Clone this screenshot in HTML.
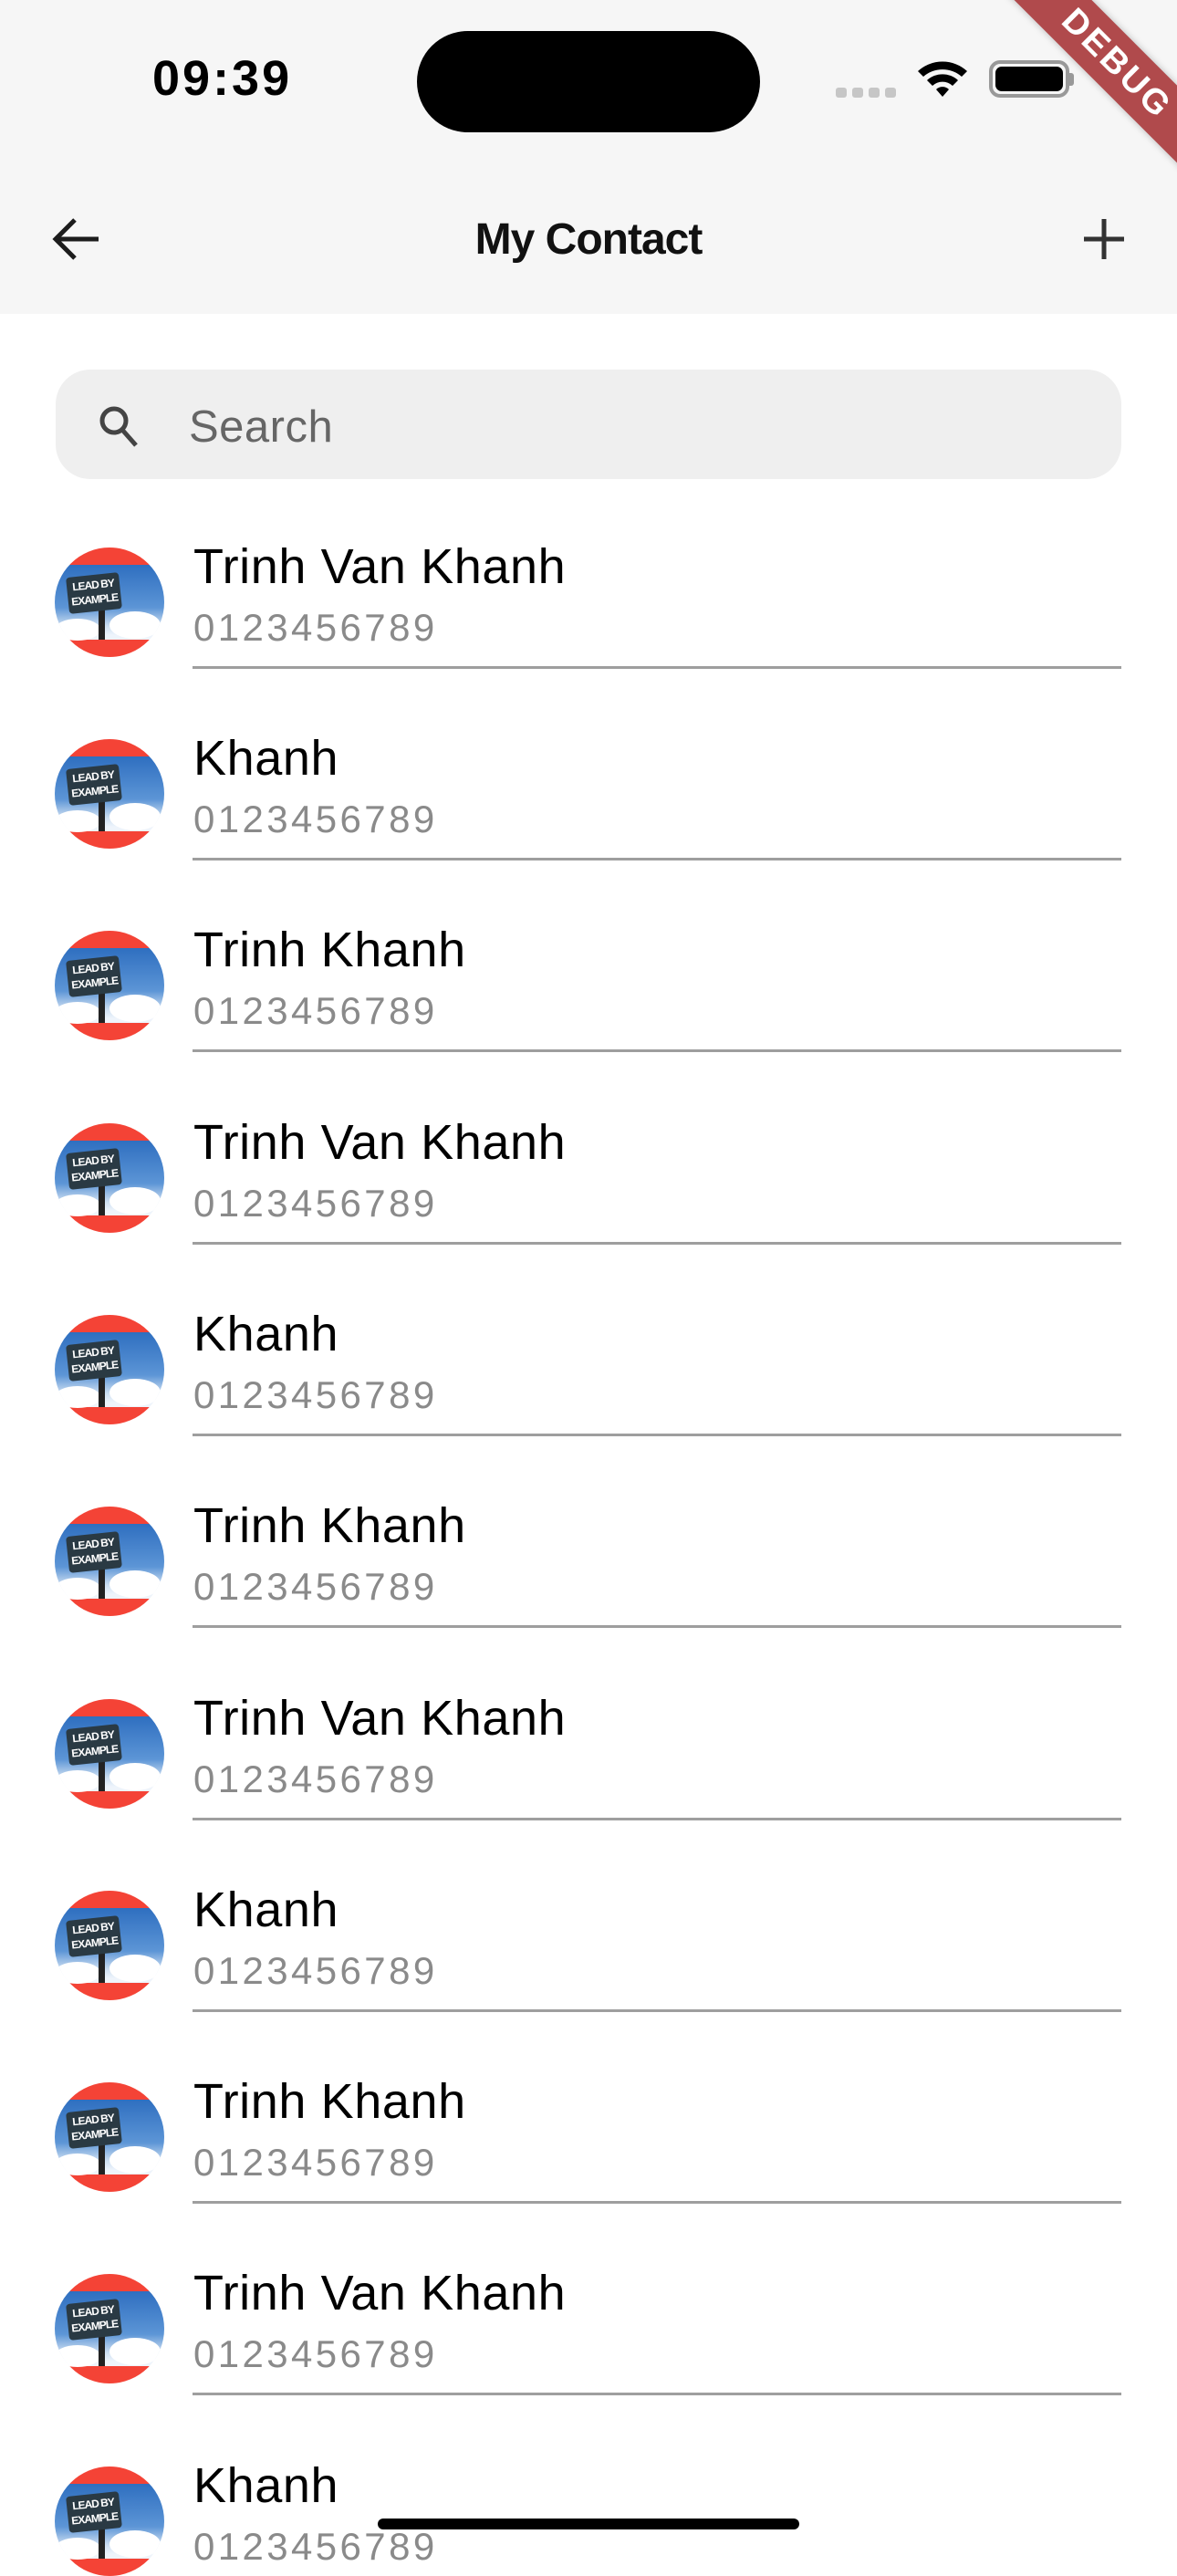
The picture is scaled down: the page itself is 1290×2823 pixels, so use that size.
<!DOCTYPE html>
<html><head><meta charset="utf-8">
<style>
*{margin:0;padding:0;box-sizing:border-box}
body{width:1290px;height:2796px;background:#fff;position:relative;overflow:hidden;font-family:"Liberation Sans",sans-serif}
.abs{position:absolute}
.hdr{left:0;top:0;width:1290px;height:344px;background:#f6f6f6}
.name{position:absolute;left:212px;font-size:54px;line-height:54px;color:#000;white-space:nowrap;letter-spacing:0.6px}
.phone{position:absolute;left:212px;font-size:42px;line-height:42px;color:#8a8a8a;letter-spacing:3.4px;white-space:nowrap}
.div{position:absolute;left:211px;width:1018px;height:3px;background:#9e9e9e}
.av{position:absolute;left:60px;width:120px;height:120px;border-radius:50%;overflow:hidden;
background:linear-gradient(#f44336 0,#f44336 16%,#2f6fc0 16%,#5c95d6 55%,#cfe0f2 72%,#eef4fb 80%,#eef4fb 84%,#f44336 84%)}
.av .cl{position:absolute;background:#fff;border-radius:50%}
.av .post{position:absolute;left:48px;top:60px;width:7px;height:41px;background:#222}
.av .sign{position:absolute;left:14px;top:30px;width:58px;height:40px;background:#2a3a44;border-radius:4px;transform:rotate(-6deg);color:#fff;font-size:12px;line-height:16px;font-weight:bold;text-align:center;padding-top:3px;letter-spacing:-1px}
</style></head><body>
<div class="abs hdr"></div>
<div class="abs" style="left:167px;top:58px;font-size:54px;font-weight:bold;line-height:56px;color:#000;letter-spacing:3px">09:39</div>
<div class="abs" style="left:457px;top:34px;width:376px;height:111px;border-radius:56px;background:#000"></div>
<div class="abs" style="left:916px;top:96px;width:12px;height:11px;border-radius:3px;background:#c6c6c6"></div>
<div class="abs" style="left:934px;top:96px;width:12px;height:11px;border-radius:3px;background:#c6c6c6"></div>
<div class="abs" style="left:952px;top:96px;width:12px;height:11px;border-radius:3px;background:#c6c6c6"></div>
<div class="abs" style="left:970px;top:96px;width:12px;height:11px;border-radius:3px;background:#c6c6c6"></div>
<svg class="abs" style="left:1004px;top:64px" width="58" height="44" viewBox="0 0 58 44">
<path d="M2 14 A40 40 0 0 1 56 14 L50 20 A32 32 0 0 0 8 20Z" fill="#000"/>
<path d="M12 24 A25 25 0 0 1 46 24 L40 30 A16 16 0 0 0 18 30Z" fill="#000"/>
<path d="M22 34 A10 10 0 0 1 36 34 L29 42Z" fill="#000"/>
</svg>
<div class="abs" style="left:1084px;top:66px;width:88px;height:41px;border:4px solid #999;border-radius:12px;padding:3px"><div style="width:100%;height:100%;background:#000;border-radius:7px"></div></div>
<div class="abs" style="left:1172px;top:80px;width:5px;height:14px;background:#999;border-radius:0 3px 3px 0"></div>
<div class="abs" style="left:1074px;top:40px;width:300px;height:60px;background:#b04a4c;transform:rotate(45deg);color:#fff;font-weight:bold;font-size:38px;line-height:60px;text-align:center;letter-spacing:3px;box-shadow:0 0 8px rgba(0,0,0,.25)">DEBUG</div>
<svg class="abs" style="left:56px;top:238px" width="56" height="48" viewBox="0 0 56 48"><path d="M52 24H6M26 3L5 24l21 21" stroke="#1c1c1c" stroke-width="5" fill="none"/></svg>
<div class="abs" style="left:0;width:1290px;top:236px;text-align:center;font-size:48px;font-weight:bold;line-height:54px;color:#111;letter-spacing:-1px">My Contact</div>
<svg class="abs" style="left:1186px;top:238px" width="48" height="48" viewBox="0 0 48 48"><path d="M24 2V46M2 24H46" stroke="#333" stroke-width="5"/></svg>
<div class="abs" style="left:61px;top:405px;width:1168px;height:120px;border-radius:38px;background:#efefef"></div>
<svg class="abs" style="left:108px;top:444px" width="46" height="48" viewBox="0 0 46 48"><circle cx="17" cy="17" r="13" stroke="#444" stroke-width="5" fill="none"/><path d="M26 27L41 44" stroke="#444" stroke-width="5"/></svg>
<div class="abs" style="left:207px;top:441px;font-size:49px;line-height:54px;color:#666;letter-spacing:0.5px">Search</div>

<div class="av" style="top:600px"><div class="cl" style="left:0px;top:78px;width:50px;height:24px"></div><div class="cl" style="left:60px;top:70px;width:56px;height:30px"></div><div class="post"></div><div class="sign">LEAD BY<br>EXAMPLE</div></div>
<div class="name" style="top:594px">Trinh Van Khanh</div><div class="phone" style="top:667px">0123456789</div><div class="div" style="top:730px"></div>

<div class="av" style="top:810px"><div class="cl" style="left:0px;top:78px;width:50px;height:24px"></div><div class="cl" style="left:60px;top:70px;width:56px;height:30px"></div><div class="post"></div><div class="sign">LEAD BY<br>EXAMPLE</div></div>
<div class="name" style="top:804px">Khanh</div><div class="phone" style="top:877px">0123456789</div><div class="div" style="top:940px"></div>

<div class="av" style="top:1020px"><div class="cl" style="left:0px;top:78px;width:50px;height:24px"></div><div class="cl" style="left:60px;top:70px;width:56px;height:30px"></div><div class="post"></div><div class="sign">LEAD BY<br>EXAMPLE</div></div>
<div class="name" style="top:1014px">Trinh Khanh</div><div class="phone" style="top:1087px">0123456789</div><div class="div" style="top:1150px"></div>

<div class="av" style="top:1231px"><div class="cl" style="left:0px;top:78px;width:50px;height:24px"></div><div class="cl" style="left:60px;top:70px;width:56px;height:30px"></div><div class="post"></div><div class="sign">LEAD BY<br>EXAMPLE</div></div>
<div class="name" style="top:1225px">Trinh Van Khanh</div><div class="phone" style="top:1298px">0123456789</div><div class="div" style="top:1361px"></div>

<div class="av" style="top:1441px"><div class="cl" style="left:0px;top:78px;width:50px;height:24px"></div><div class="cl" style="left:60px;top:70px;width:56px;height:30px"></div><div class="post"></div><div class="sign">LEAD BY<br>EXAMPLE</div></div>
<div class="name" style="top:1435px">Khanh</div><div class="phone" style="top:1508px">0123456789</div><div class="div" style="top:1571px"></div>

<div class="av" style="top:1651px"><div class="cl" style="left:0px;top:78px;width:50px;height:24px"></div><div class="cl" style="left:60px;top:70px;width:56px;height:30px"></div><div class="post"></div><div class="sign">LEAD BY<br>EXAMPLE</div></div>
<div class="name" style="top:1645px">Trinh Khanh</div><div class="phone" style="top:1718px">0123456789</div><div class="div" style="top:1781px"></div>

<div class="av" style="top:1862px"><div class="cl" style="left:0px;top:78px;width:50px;height:24px"></div><div class="cl" style="left:60px;top:70px;width:56px;height:30px"></div><div class="post"></div><div class="sign">LEAD BY<br>EXAMPLE</div></div>
<div class="name" style="top:1856px">Trinh Van Khanh</div><div class="phone" style="top:1929px">0123456789</div><div class="div" style="top:1992px"></div>

<div class="av" style="top:2072px"><div class="cl" style="left:0px;top:78px;width:50px;height:24px"></div><div class="cl" style="left:60px;top:70px;width:56px;height:30px"></div><div class="post"></div><div class="sign">LEAD BY<br>EXAMPLE</div></div>
<div class="name" style="top:2066px">Khanh</div><div class="phone" style="top:2139px">0123456789</div><div class="div" style="top:2202px"></div>

<div class="av" style="top:2282px"><div class="cl" style="left:0px;top:78px;width:50px;height:24px"></div><div class="cl" style="left:60px;top:70px;width:56px;height:30px"></div><div class="post"></div><div class="sign">LEAD BY<br>EXAMPLE</div></div>
<div class="name" style="top:2276px">Trinh Khanh</div><div class="phone" style="top:2349px">0123456789</div><div class="div" style="top:2412px"></div>

<div class="av" style="top:2492px"><div class="cl" style="left:0px;top:78px;width:50px;height:24px"></div><div class="cl" style="left:60px;top:70px;width:56px;height:30px"></div><div class="post"></div><div class="sign">LEAD BY<br>EXAMPLE</div></div>
<div class="name" style="top:2486px">Trinh Van Khanh</div><div class="phone" style="top:2559px">0123456789</div><div class="div" style="top:2622px"></div>

<div class="av" style="top:2703px"><div class="cl" style="left:0px;top:78px;width:50px;height:24px"></div><div class="cl" style="left:60px;top:70px;width:56px;height:30px"></div><div class="post"></div><div class="sign">LEAD BY<br>EXAMPLE</div></div>
<div class="name" style="top:2697px">Khanh</div><div class="phone" style="top:2770px">0123456789</div>

<div class="abs" style="left:414px;top:2760px;width:462px;height:12px;border-radius:6px;background:#000"></div>
</body></html>
